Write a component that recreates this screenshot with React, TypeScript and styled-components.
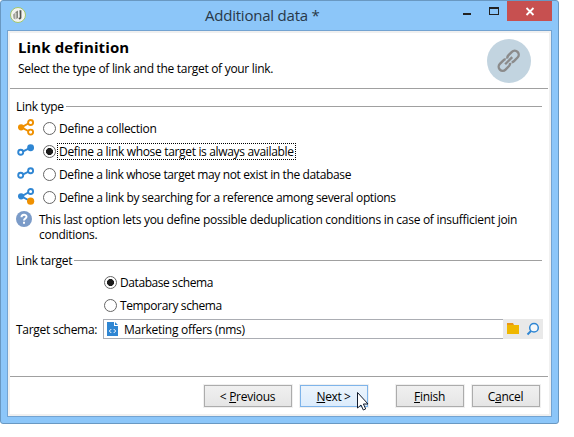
import React from "react";
import styled, { createGlobalStyle } from "styled-components";

const GlobalStyle = createGlobalStyle`
  * { box-sizing: border-box; }
  body { margin: 0; background: #fff; overflow: hidden; }
`;

const Window = styled.main`
  position: relative;
  width: 559px;
  height: 424px;
  padding: 0 6px 6px;
  display: flex;
  flex-direction: column;
  background: #8cc6f9;
  border: 1px solid #6998c2;
  border-radius: 3px;
  font: 12px/15px "Open Sans", "Noto Sans", sans-serif;
  color: #000;
`;

const TitleBar = styled.header`
  height: 29px;
  flex: none;
  display: flex;
  align-items: flex-start;
  padding-left: 2px;
`;

const AppIcon = styled.svg`
  margin-top: 5px;
  width: 18px;
  height: 18px;
`;

const Title = styled.h1`
  flex: 1;
  margin: 4px 0 0 178px;
  font-size: 15px;
  line-height: 20px;
  font-weight: 400;
  color: #283848;
  letter-spacing: -0.22px;
  white-space: nowrap;
`;

const Controls = styled.div`
  display: flex;
  height: 20px;
`;

const ControlButton = styled.button<{ $width: number; $close?: boolean }>`
  width: ${(p) => p.$width}px;
  height: 20px;
  padding: 0;
  border: 0;
  display: block;
  background: ${(p) => (p.$close ? "#c75050" : "transparent")};
  svg { display: block; }
`;

const Client = styled.section`
  flex: 1;
  display: flex;
  flex-direction: column;
  background: #fff;
  border: 1px solid #73a3d1;
  box-shadow: inset 0 0 0 2px #f0f0f0;
  padding: 2px;
`;

const Banner = styled.div`
  height: 56px;
  flex: none;
  display: flex;
  justify-content: space-between;
  margin-right: 1px;
  padding: 5px 16px 0 8px;
  border-bottom: 1px solid #a0a0a0;
`;

const Heading = styled.h2`
  margin: -1px 0 4px;
  font-size: 15px;
  line-height: 20px;
  font-weight: 700;
  letter-spacing: 0.12px;
`;

const Text = styled.span<{ $spacing?: number; $focused?: boolean }>`
  display: block;
  white-space: nowrap;
  letter-spacing: ${(p) => p.$spacing ?? -0.3}px;
  line-height: 15px;
  padding: 0 1px;
  margin-left: -1px;
  outline: ${(p) => (p.$focused ? "1px dotted #000" : "none")};
`;

const Badge = styled.svg`
  width: 46px;
  height: 46px;
  display: block;
`;

const Form = styled.div`
  flex: 1;
  padding: 9px 6px 0 6px;
`;

const Legend = styled.div`
  display: flex;
  align-items: center;
  gap: 1px;
  height: 16px;
  padding-right: 1px;
  &::after {
    content: "";
    flex: 1;
    height: 1px;
    background: #a0a0a0;
  }
`;

const Options = styled.div<{ $indent?: number }>`
  padding: 3px 0 0 ${(p) => p.$indent ?? 0}px;
`;

const OptionRow = styled.label`
  display: flex;
  align-items: center;
  height: 23px;
`;

const OptionIcon = styled.svg`
  width: 22px;
  height: 19px;
  margin-right: 5px;
  flex: none;
`;

const Radio = styled.span<{ $checked?: boolean }>`
  width: 13px;
  height: 13px;
  margin-right: 3px;
  flex: none;
  border: 1px solid #666;
  border-radius: 50%;
  background: ${(p) => (p.$checked ? "radial-gradient(circle, #1c1c1c 3.2px, #fff 3.8px)" : "#fff")};
`;

const Hint = styled.div`
  display: flex;
  gap: 7px;
  height: 43px;
  svg { flex: none; display: block; }
`;

const HintText = styled.div`
  padding-top: 3px;
`;

const FieldRow = styled.div`
  display: flex;
  align-items: center;
  margin-top: 2px;
  height: 20px;
`;

const FieldLabel = styled.div`
  width: 87px;
  flex: none;
`;

const Field = styled.div`
  width: 400px;
  height: 20px;
  flex: none;
  display: flex;
  align-items: center;
  gap: 5px;
  padding-left: 3px;
  border: 1px solid #abadb3;
  border-right: 0;
`;

const FieldTools = styled.div`
  width: 40px;
  height: 20px;
  flex: none;
  background: #e9e9e9;
  svg { display: block; }
`;

const Footer = styled.footer`
  height: 38px;
  flex: none;
  display: flex;
  margin-right: 1px;
  padding: 8px 8px 0 0;
  justify-content: flex-end;
  border-top: 1px solid #a0a0a0;
`;

const Button = styled.button<{ $width: number; $gap?: number; $active?: boolean }>`
  width: ${(p) => p.$width}px;
  height: 22px;
  margin-left: ${(p) => p.$gap ?? 8}px;
  padding: 0;
  display: flex;
  align-items: center;
  justify-content: center;
  border: 1px solid ${(p) => (p.$active ? "#7eb4ea" : "#acacac")};
  box-shadow: 0 0 0 1px #f0f0f0;
  background: ${(p) => (p.$active ? "linear-gradient(#ecf4fc, #dcecfc)" : "linear-gradient(#f0f0f0, #e5e5e5)")};
  font: inherit;
  color: inherit;
  u { text-underline-offset: 1px; text-decoration-skip-ink: none; }
`;

const Pointer = styled.svg`
  position: absolute;
  left: 355px;
  top: 390px;
`;

type IconKind = "collection" | "always" | "maybe" | "search";
const BLUE = "#2f86d3";
const ORANGE = "#ef9000";

const LinkIcon = ({ kind }: { kind: IconKind }) => {
  const branching = kind === "collection" || kind === "search";
  const color = kind === "collection" ? ORANGE : BLUE;
  return (
    <OptionIcon viewBox="0 0 22 19" fill="none" stroke={color} strokeWidth="1.9">
      {branching ? (
        <>
          <path d="M5.5 8.3 12.2 4.500M5.5 8.3l6.700 3.700" />
          <circle cx="5.1" cy="8.3" r="3.1" fill={color} stroke="none" />
          <circle cx="14.6" cy="3.5" r="2.5" />
          {kind === "search" ? (
            <circle cx="14.6" cy="13.2" r="3.6" fill={ORANGE} stroke="none" />
          ) : (
            <circle cx="14.6" cy="13.100" r="2.5" />
          )}
        </>
      ) : (
        <>
          <path d="m7.2 9.300 5.300-2.600" />
          <circle cx="4.700" cy="10.300" r="2.500" />
          <circle cx="14.600" cy="5.700" r="2.500" fill={kind === "always" ? color : "none"} />
        </>
      )}
    </OptionIcon>
  );
};

const options: { kind: IconKind; label: string; spacing: number }[] = [
  { kind: "collection", label: "Define a collection", spacing: -0.28 },
  { kind: "always", label: "Define a link whose target is always available", spacing: -0.33 },
  { kind: "maybe", label: "Define a link whose target may not exist in the database", spacing: -0.37 },
  { kind: "search", label: "Define a link by searching for a reference among several options", spacing: -0.35 },
];

export default function App() {
  return (
    <>
      <GlobalStyle />
      <Window>
        <TitleBar>
          <AppIcon viewBox="0 0 18 18">
            <circle cx="9" cy="9" r="7.5" fill="#f3f3ef" stroke="#a3c76b" />
            <path d="M4 8.500 6.500 6.500v7l-2-1z" fill="#a3a39d" />
            <path d="M6 6.200 9 4.500v7.500L7.300 13V7z" fill="#85867e" />
            <path d="M10.500 4.200h1.900v8l-1.600 1.500-1.600-1.800 1.600-.4z" fill="#50514a" />
          </AppIcon>
          <Title>Additional data *</Title>
          <Controls>
            <ControlButton $width={26} aria-label="Minimize">
              <svg width="26" height="20"><path d="M5 12h8v2H5z" fill="#222" /></svg>
            </ControlButton>
            <ControlButton $width={23} aria-label="Maximize">
              <svg width="23" height="20"><path d="M5 6h10v8H5zM6 8v5h8V8z" fillRule="evenodd" fill="#222" /></svg>
            </ControlButton>
            <ControlButton $width={45} $close aria-label="Close">
              <svg width="45" height="20"><path d="m19.5 7 7 7m0-7-7 7" stroke="#fff" strokeWidth="1.8" /></svg>
            </ControlButton>
          </Controls>
        </TitleBar>
        <Client>
          <Banner>
            <div>
              <Heading>Link definition</Heading>
              <Text>Select the type of link and the target of your link.</Text>
            </div>
            <Badge viewBox="0 0 46 46">
              <circle cx="23" cy="23" r="22" fill="#c2d4e0" />
              <g transform="translate(22.7 22.7) rotate(-45)" fill="none" stroke="#8b8b8b" strokeWidth="2.4">
                <path d="M-1-3.200A4 4 0 0 0-3.500-4H-8.500a4 4 0 0 0 0 8h5A4 4 0 0 0-.500 2.500M1 3.200A4 4 0 0 0 3.500 4h5a4 4 0 0 0 0-8h-5A4 4 0 0 0 .500-2.500M-5 0H5" />
              </g>
            </Badge>
          </Banner>
          <Form>
            <Legend><Text>Link type</Text></Legend>
            <Options>
              {options.map((o) => (
                <OptionRow key={o.kind}>
                  <LinkIcon kind={o.kind} />
                  <Radio $checked={o.kind === "always"} />
                  <Text $spacing={o.spacing} $focused={o.kind === "always"}>{o.label}</Text>
                </OptionRow>
              ))}
            </Options>
            <Hint>
              <svg width="16" height="18" viewBox="0 0 16 18">
                <circle cx="8" cy="10" r="8" fill="#7b9bc8" />
                <path d="M5.500 8.200c0-3.200 5-3.200 5-.4C10.500 9.500 8 9.500 8 11.500M8 12.800v2" fill="none" stroke="#fff" strokeWidth="2" />
              </svg>
              <HintText>
                <Text $spacing={-0.28}>This last option lets you define possible deduplication conditions in case of insufficient join</Text>
                <Text $spacing={-0.28}>conditions.</Text>
              </HintText>
            </Hint>
            <Legend><Text>Link target</Text></Legend>
            <Options $indent={88}>
              <OptionRow><Radio $checked /><Text $spacing={-0.42}>Database schema</Text></OptionRow>
              <OptionRow><Radio /><Text $spacing={-0.38}>Temporary schema</Text></OptionRow>
            </Options>
            <FieldRow>
              <FieldLabel><Text>Target schema:</Text></FieldLabel>
              <Field>
                <svg width="12" height="14" viewBox="0 0 12 14">
                  <path d="M0 0h7v4h4v10H0z" fill={BLUE} />
                  <path d="M8 0v3h3z" fill={BLUE} />
                  <path d="M4.300 7 2.300 9l2 2M6.700 7l2 2-2 2" fill="none" stroke="#fff" />
                </svg>
                <Text $spacing={-0.27}>Marketing offers (nms)</Text>
              </Field>
              <FieldTools>
                <svg width="40" height="20">
                  <path d="M4 4h6l1 2H4z" fill="#e99518" />
                  <path d="M4 6h12v9H4z" fill="#efb700" />
                  <circle cx="31" cy="8.700" r="4.300" fill="#f5f8fa" stroke={BLUE} strokeWidth="1.500" />
                  <path d="m28 12-3.500 3.500" stroke={BLUE} strokeWidth="2" />
                </svg>
              </FieldTools>
            </FieldRow>
          </Form>
          <Footer>
            <Button $width={88}><Text $spacing={-0.25}>&lt; <u>P</u>revious</Text></Button>
            <Button $width={68} $active><Text $spacing={-0.4}><u>N</u>ext &gt;</Text></Button>
            <Button $width={68} $gap={28}><Text><u>F</u>inish</Text></Button>
            <Button $width={68}><Text>C<u>a</u>ncel</Text></Button>
          </Footer>
        </Client>
        <Pointer width="14" height="20" viewBox="0 0 14 20">
          <path d="M1.500 1.500v15.500l3.500-3 2.300 5 2.400-1.100-2.300-4.900h4.600z" fill="#fff" stroke="#111b2c" />
        </Pointer>
      </Window>
    </>
  );
}
